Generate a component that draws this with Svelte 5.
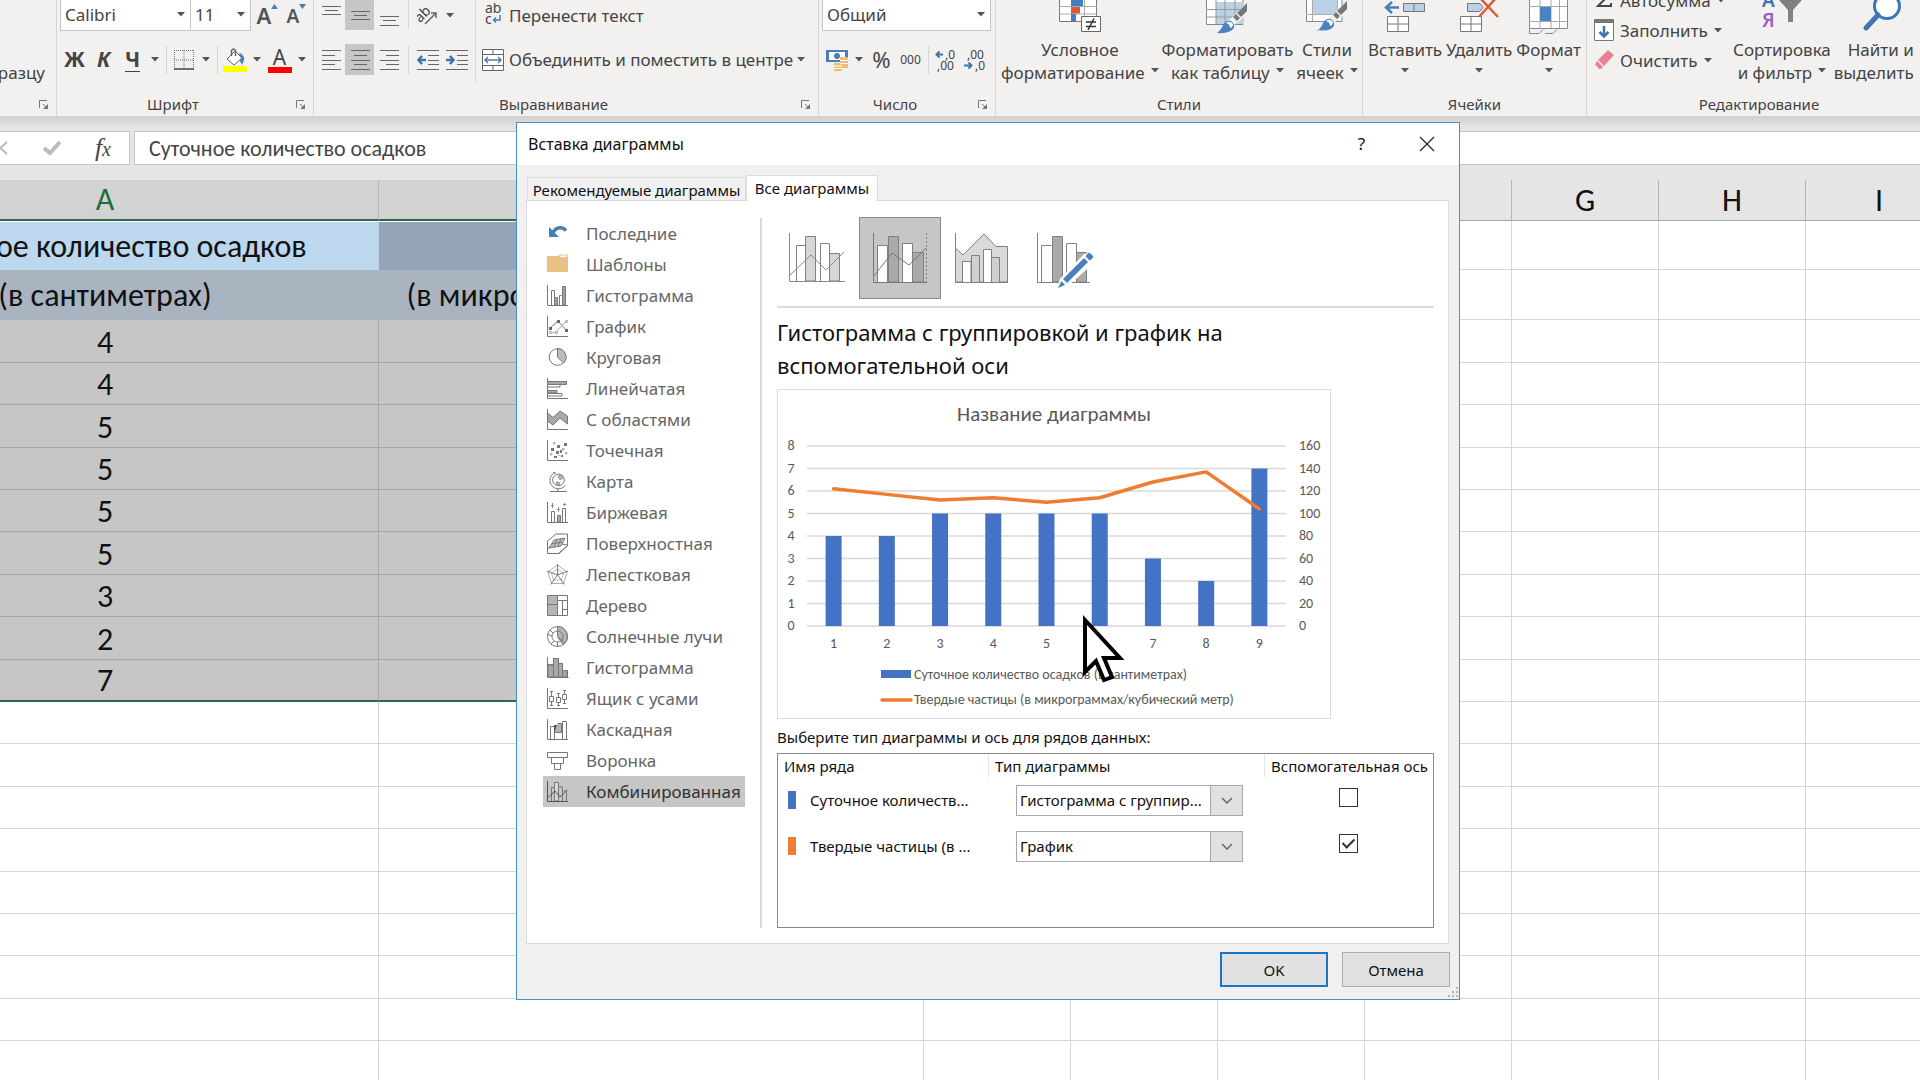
<script>
  const columns = ['A', 'B', 'C', 'D', 'E', 'F', 'G', 'H', 'I'];
  const rainfall = [4, 4, 5, 5, 5, 5, 3, 2, 7];
  const particles = [122, 117, 112, 114, 110, 114, 128, 137, 104];
  const rest = columns.slice(2);
  const blankRows = Array.from({ length: 9 }, (_, i) => i + rainfall.length);

  let formula = $state('Суточное количество осадков');
  let selectedType = $state(18);
  let selectedVariant = $state(1);
  let series = $state([
    { name: 'Суточное количеств...', color: 'blue', type: 'Гистограмма с группир...', secondary: false },
    { name: 'Твердые частицы (в ...', color: 'orange', type: 'График', secondary: true }
  ]);

  const isTall = (i) => i % 5 === 0 || i % 5 === 2;

  const axis = '<path d="M.5 0V20.5H21"/>';
  const types = [
    ['Последние', '<path d="M19 7.5C15 3 9 4 6 9.500" stroke="#4a7fb5" stroke-width="3.500"/><path d="M2 4V14H12Z" fill="#4a7fb5" stroke="none"/>'],
    ['Шаблоны', '<path d="M0 2H11L13 .5H21V18H0Z" fill="#e9c283" stroke="none"/><path d="M12 3L14 1.500H20V3Z" fill="#fff" stroke="none"/>'],
    ['Гистограмма', axis + '<path d="M4.500 20V5.500H7.500V20M12.500 20V10.500H14.500"/><path d="M7.500 20V12.500H10.500V20ZM15.500 20V1.500H18.500V20Z" fill="#a0a0a0"/>'],
    ['График', axis + '<path d="M3 12L11 5L20 15"/><path d="M3 17L9 16L19 5" stroke="#a5a5a5"/><path d="M2 11h3v3H2zM10 4h3v3h-3zM18 13h3v3h-3z" fill="#666" stroke="none"/><path d="M2.500 15.500h2v2h-2zM8.500 15.500h2v2h-2zM18.500 4.500h2v2h-2z" fill="#fff" stroke="#aaa"/>'],
    ['Круговая', '<circle cx="10.500" cy="10" r="8.300"/><path d="M10.500 10V1.700A8.300 8.300 0 0 1 16.500 16Z" fill="#bbb"/>'],
    ['Линейчатая', axis + '<path d="M.5 3.500H19.500V6.500H.5ZM.5 12.500H10V15H.5Z" fill="#a8a8a8"/><path d="M.5 6.500H13V9H.5M.5 15.500H15V18H.5"/>'],
    ['С областями', axis + '<path d="M.5 4L6 8.500L13 2L20.500 7V15L13 9L6 16L.5 12Z" fill="#a8a8a8"/>'],
    ['Точечная', axis + '<path d="M4 8h3v3H4zM10 5h3v3h-3zM17 3h3v3h-3zM9 11h3v3H9zM13 10h2v3h-2zM7 16h3v2H7zM14 15h2v2h-2z" fill="#777" stroke="none"/><path d="M6.500 2.500h1.500v1.500H6.500zM15.500 8.500h1.500v1.500h-1.500zM3.500 13.500H5V15H3.500zM18.500 12.500H20V14h-1.500zM11.500 15.500H13" stroke="#aaa"/>'],
    ['Карта', '<circle cx="11.500" cy="9" r="5.800"/><path d="M8 1.500A8.500 8.500 0 1 0 18.500 14M6 1L9 2.500M11 17.500V20M3 20.500H20"/><path d="M11 5L15 4L16 7L13 9ZM9 11L12 11L13 14L10 14Z" fill="#b5b5b5" stroke="#999"/>'],
    ['Биржевая', axis + '<path d="M4.500 20V9.500H7.500V20M15.500 20V6.500H18.500V20"/><path d="M10.500 20V13.500H13.500V20Z" fill="#a8a8a8"/><path d="M5.500 1V6M11.500 5V10M17.500 1V4M4 3.500H7M10 7.500H13M16 2.500H19" stroke="#888"/>'],
    ['Поверхностная', '<path d="M.5 8L9 1H20.500V13L12 20.500H.5ZM.5 16L9 10L20.500 12M12 20L20 13"/><path d="M2 15L7 7L18 5L14 13Z" fill="#c5c5c5"/><path d="M4.500 11L16 9M10 6.500L7 14M14 6L10.500 14"/>'],
    ['Лепестковая', '<path d="M10.500 1L20 8L16.500 19.500H4.500L1 8Z" stroke="#aaa"/><path d="M10.500 5L16.500 9L14.500 16H6.500L4.500 9Z" stroke="#bbb"/><path d="M10.500 0V11L0 7M10.500 11L21 7M10.500 11L3.500 20.500M10.500 11L17.500 20.500"/>'],
    ['Дерево', '<path d="M.5.5H10.500V20.500H.5Z" fill="#b5b5b5"/><path d="M.5 9.500H10.500M10.500.5H20.500V20.500H10.500M10.500 5.500H20.500M15.500 5.500V20.500M15.500 14.500H20.500"/>'],
    ['Солнечные лучи', '<circle cx="10.500" cy="10.500" r="10"/><path d="M10.500.5A10 10 0 0 1 16 18.700L10.500 10.500Z" fill="#b5b5b5"/><circle cx="10.500" cy="10.500" r="5.500"/><path d="M10.500 0V10.500L18 17M5 10.500L.5 8M7 15L4 18M10.500 16V21M6 7L3 4"/>'],
    ['Гистограмма', '<path d="M.5 0V20.500H21.500M.5 7.500H6.500V1.500H11.500V6.500H15.500V13.500H20.500V20.500"/><path d="M1 8H6.500V20H1ZM6.500 1.500H11.500V20H6.500ZM11.500 6.500H15.500V20H11.500ZM15.500 13.500H20V20H15.500Z" fill="#a8a8a8"/>'],
    ['Ящик с усами', axis + '<path d="M2.500 8.500H6.500V13.500H2.500ZM9.500 9.500H13.500V14.500H9.500ZM15.500 6.500H19.500V11.500H15.500ZM4.500 3V8M4.500 14V18M11.500 6V9M11.500 15V18M17.500 2V6M17.500 12V15M3 3.500H6M3 17.500H6M10 5.500H13M10 17.500H13M16 2.500H19M16 15.500H19"/>'],
    ['Каскадная', axis + '<path d="M3.500 20V7.500H7.500V20M15.500 20V2.500H19.500V20"/><path d="M7 6H10.500V13H7Z" fill="#555" stroke="none"/><path d="M10.500 4.500H14.500V13.500H7.500" fill="#b5b5b5"/>'],
    ['Воронка', '<path d="M.5 2.500H20.500V7.500H.5ZM4.500 7.500H16.500V13.500H4.500ZM7.500 13.500H13.500V19.500H7.500Z"/>'],
    ['Комбинированная', '<path d="M4.500 20V6.500H7.500M11.500 20V6H15.500V20M16.500 10H19.500V20"/><path d="M7.500 20V1.500H11.500V20Z" fill="#d8d8d8"/><path d="M.5 0V20.500H21M.5 17L8 10L13 16L20.500 9" stroke="#555"/>']
  ];

  const variants = [
    ['Гистограмма с группировкой и график', '<path d="M19.500 64V28.500H28.500M43.500 64V26.500H52.500V64" fill="#fff"/><path d="M28.500 64V19.500H38.500V64ZM52.500 64V36.500H62.500V64Z" fill="#d6d6d6"/><path d="M12.500 16V64.500H68M12 59L34 38L49 53L67 35" stroke="#8a8a8a"/>'],
    ['Гистограмма с группировкой и график на вспомогательной оси', '<path d="M18.500 65V28.500H28.500V65M43.500 65V26.500H53.500V65" fill="#fff"/><path d="M29.500 65V19.500H39.500V65ZM53.500 65V35.500H64.500V65Z" fill="#aaa"/><path d="M14.500 16V65.500H68M15 59L33 36L50 48L67 31" stroke="#777"/><path d="M67.500 16V65" stroke-dasharray="2 2"/>'],
    ['С областями и гистограмма', '<path d="M14.500 31L22 38L43 17L55 29.500H66.500V65H14.500Z" fill="#d9d9d9"/><path d="M21.500 65V44.500H30V65M42.500 65V32.500H50.500V65" fill="#fff"/><path d="M30.500 65V38.500H38.500V65M50.500 65V40.500H58.500V65" fill="#d0d0d0"/><path d="M14.500 16V65.500H67"/>'],
    ['Пользовательская комбинация', '<path d="M18.500 65V28.500H28.500M43.500 65V26.500H53.500V65" fill="#fff"/><path d="M29.500 65V19.500H39.500V65ZM53.500 65V35.500H63.500V65Z" fill="#aaa"/><path d="M14.500 16V65.500H67"/><g stroke="none"><path d="M34 72L37 62L61 37L69 35L73 40L71 46L45 69Z" fill="#fff"/><path d="M35 71L38.500 64L42 68ZM40 62L61 41L65 45L44 66ZM62.500 39.500L65 36H67L70 39V41L66.500 43.500Z" fill="#4a7fc0"/></g>']
  ];

  const plot = { left: 30, right: 509, top: 57, bottom: 237 };
  const slot = (plot.right - plot.left) / rainfall.length;
  const centre = (i) => plot.left + slot * (i + 0.5);
  const rise = (share) => plot.bottom - (plot.bottom - plot.top) * share;
  const linePoints = particles.map((v, i) => `${centre(i)},${rise(v / 160)}`).join(' ');
</script>

{#snippet arrow()}
  <svg class="arrow" width="8" height="5" viewBox="0 0 8 5" aria-hidden="true"><path d="M0 0H8L4 4.500Z" fill="#555" /></svg>
{/snippet}

{#snippet drop(name)}
  <button class="drop" aria-label={name}>{@render arrow()}</button>
{/snippet}

{#snippet caption(text, launcher)}
  <div class="caption" class:launchable={launcher}>
    <span>{text}</span>
    {#if launcher}
      <button class="launcher" aria-label={`Параметры: ${text}`}>
        <svg width="10" height="10" viewBox="0 0 10 10" fill="none" stroke="#777"><path d="M.5 8V.5H8" /><path d="M4 4L8 8" /><path d="M9 4V9H4Z" fill="#777" stroke="none" /></svg>
      </button>
    {/if}
  </div>
{/snippet}

{#snippet lines(d)}
  <svg width="20" height="22" viewBox="0 0 20 22" stroke="#666" fill="none" aria-hidden="true"><path {d} /></svg>
{/snippet}

<main class="app">
  <header class="ribbon">
    <section class="group clipboard">
      <div class="body"><button class="painter">по образцу</button></div>
      {@render caption('', true)}
    </section>

    <section class="group font">
      <div class="body rows">
        <div class="row top">
          <label class="combo family"><select aria-label="Шрифт"><option>Calibri</option></select>{@render arrow()}</label>
          <label class="combo size"><select aria-label="Размер шрифта"><option>11</option></select>{@render arrow()}</label>
          <button class="tool grow" aria-label="Увеличить размер шрифта"><b>A</b><svg width="7" height="5" viewBox="0 0 7 5"><path d="M0 5L3.500 0L7 5Z" fill="#4a7fb5" /></svg></button>
          <button class="tool shrink" aria-label="Уменьшить размер шрифта"><b>A</b><svg width="7" height="5" viewBox="0 0 7 5"><path d="M0 0L3.500 5L7 0Z" fill="#4a7fb5" /></svg></button>
        </div>
        <div class="row">
          <button class="tool letter">Ж</button>
          <button class="tool letter italic">К</button>
          <button class="tool letter under">Ч</button>
          {@render drop('Подчеркивание')}
          <i class="vsep"></i>
          <button class="tool" aria-label="Границы">
            <svg width="20" height="20" viewBox="0 0 20 20" fill="none" stroke="#777"><path d="M0 .5H20M.5 0V19M19.500 0V19M10 0V19M0 10H20" stroke-dasharray="1 1" /><path d="M0 19H20" stroke="#444" stroke-width="1.500" /></svg>
          </button>
          {@render drop('Границы')}
          <i class="vsep"></i>
          <button class="tool" aria-label="Цвет заливки">
            <svg width="24" height="24" viewBox="0 0 24 24" fill="none"><rect y="18" width="24" height="6" fill="#ff0" /><path d="M4 11L12 3L19 10L11 17Z" fill="#fff" stroke="#666" /><path d="M8.500 8V2.500Q10.500-.5 12.500 2.500V8" stroke="#666" stroke-width="1.500" /><path d="M17 5Q22 8 21 12L19 17L17 13Q19 9 16 6Z" fill="#4a7fb5" /></svg>
          </button>
          {@render drop('Цвет заливки')}
          <button class="tool color" aria-label="Цвет текста"><span>A</span><i></i></button>
          {@render drop('Цвет текста')}
        </div>
      </div>
      {@render caption('Шрифт', true)}
    </section>

    <section class="group align">
      <div class="body split">
        <div class="rows">
          <div class="row top">
            <button class="tool" aria-label="По верхнему краю">{@render lines('M1 2.500H20M4 6.500H17M1 10.500H20')}</button>
            <button class="tool on" aria-label="По середине">{@render lines('M1 7.500H20M4 11.500H17M1 15.500H20')}</button>
            <button class="tool" aria-label="По нижнему краю">{@render lines('M1 12.500H20M4 16.500H17M1 21.500H20')}</button>
            <i class="vsep wide"></i>
            <button class="tool" aria-label="Ориентация">
              <svg width="22" height="22" viewBox="0 0 22 22" fill="none" stroke="#666"><text x="-2" y="13" transform="rotate(-45 8 10)" font-family="Noto Sans, sans-serif" font-size="14" fill="#444" stroke="none">ab</text><path d="M8 20L19 9M14 9H19V14" stroke-width="1.500" /></svg>
            </button>
            {@render drop('Ориентация')}
          </div>
          <div class="row">
            <button class="tool" aria-label="По левому краю">{@render lines('M1 1.500H20M1 6.500H14M1 11.500H20M1 15.500H14M1 20.500H20')}</button>
            <button class="tool on" aria-label="По центру">{@render lines('M1 1.500H20M4 6.500H17M1 11.500H20M4 15.500H17M1 20.500H20')}</button>
            <button class="tool" aria-label="По правому краю">{@render lines('M1 1.500H20M7 6.500H20M1 11.500H20M7 15.500H20M1 20.500H20')}</button>
            <i class="vsep wide"></i>
            <button class="tool" aria-label="Уменьшить отступ">
              <svg width="22" height="22" viewBox="0 0 22 22" fill="none" stroke="#666"><path d="M0 1.500H22M11 6.500H22M11 11.500H22M11 15.500H22M0 20.500H22" /><path d="M9 11H2M5 7L1.500 11L5 15" stroke="#3f74ad" stroke-width="2.500" /></svg>
            </button>
            <button class="tool" aria-label="Увеличить отступ">
              <svg width="22" height="22" viewBox="0 0 22 22" fill="none" stroke="#666"><path d="M0 1.500H22M11 6.500H22M11 11.500H22M11 15.500H22M0 20.500H22" /><path d="M0 11H7M4 7L7.500 11L4 15" stroke="#3f74ad" stroke-width="2.500" /></svg>
            </button>
          </div>
        </div>
        <i class="tallsep"></i>
        <div class="rows">
          <div class="row top">
            <button class="wide-tool">
              <svg width="22" height="24" viewBox="0 0 22 24" fill="none"><g font-family="Noto Sans, sans-serif" font-size="14" fill="#444"><text x="3" y="10">ab</text><text x="3" y="21">c</text></g><path d="M18 12V17H12M14 14.500L11.500 17L14 19.500" stroke="#4a7fb5" stroke-width="1.500" /></svg>
              Перенести текст
            </button>
          </div>
          <div class="row">
            <button class="wide-tool">
              <svg width="22" height="22" viewBox="0 0 22 22" fill="#fff" stroke="#666"><path d="M.5.5H21.500V21.500H.5ZM.5 5.500H21.500M.5 16.500H21.500M11 .5V5.500M11 16.500V21.500" /><path d="M3 11H19M6 8L3 11L6 14M16 8L19 11L16 14" fill="none" stroke="#4a7fb5" stroke-width="1.500" /></svg>
              Объединить и поместить в центре
            </button>
            {@render drop('Объединить')}
          </div>
        </div>
      </div>
      {@render caption('Выравнивание', true)}
    </section>

    <section class="group number">
      <div class="body rows">
        <div class="row top">
          <label class="combo format"><select aria-label="Числовой формат"><option>Общий</option></select>{@render arrow()}</label>
        </div>
        <div class="row">
          <button class="tool" aria-label="Денежный формат">
            <svg width="22" height="22" viewBox="0 0 22 22"><path d="M0 1H22V13H0Z" fill="#4a7fb5" /><path d="M3 3H19V11H3Z" fill="#fff" /><circle cx="11" cy="7" r="3" fill="#4a7fb5" /><path d="M14 8H22V19H14ZM8 14H16V22H8Z" fill="#edbd77" /><path d="M14 11.500H22M14 14.500H22M8 17H16M8 19.500H16" stroke="#fff" /></svg>
          </button>
          {@render drop('Денежный формат')}
          <button class="tool percent">%</button>
          <button class="tool zeros">000</button>
          <i class="vsep"></i>
          <button class="tool" aria-label="Увеличить разрядность">
            <svg width="22" height="24" viewBox="0 0 22 24"><g font-family="Noto Sans, sans-serif" font-size="12" fill="#444"><text x="10" y="11">,0</text><text x="2" y="22">,00</text></g><path d="M8 6.500H2M4.500 3.500L1.500 6.500L4.500 9.500" fill="none" stroke="#3f74ad" stroke-width="2" /></svg>
          </button>
          <button class="tool" aria-label="Уменьшить разрядность">
            <svg width="22" height="24" viewBox="0 0 22 24"><g font-family="Noto Sans, sans-serif" font-size="12" fill="#444"><text x="3" y="11">,00</text><text x="11" y="22">,0</text></g><path d="M0 17.500H7M4.500 14.500L7.500 17.500L4.500 20.500" fill="none" stroke="#3f74ad" stroke-width="2" /></svg>
          </button>
        </div>
      </div>
      {@render caption('Число', true)}
    </section>

    <section class="group styles">
      <div class="body bigs">
        <button class="big">
          <svg width="42" height="34" viewBox="0 0 42 34"><path d="M.5 0V21.500H37.500V0" fill="#fff" stroke="#777" /><path d="M0 6.500H38M0 14H38M12.500 0V21M25.500 0V21" stroke="#aaa" fill="none" /><path d="M12 0H24V6H12ZM12 14H17V21H12Z" fill="#3f7fc0" /><path d="M12 7H21V13.500H12Z" fill="#dd5a30" /><path d="M22.500 16.500H41.500V31.500H22.500Z" fill="#fff" stroke="#666" /><path d="M27 22H37M27 26.500H37M35 18.500L29 30" stroke="#333" fill="none" stroke-width="1.500" /></svg>
          <span>Условное</span><span>форматирование {@render arrow()}</span>
        </button>
        <button class="big">
          <svg width="42" height="34" viewBox="0 0 42 34"><path d="M.5 0V24.500H37V0" fill="#fff" stroke="#888" /><path d="M10 2H38V24H10Z" fill="#bcd0e6" /><path d="M0 9.500H38M0 17H38M10 0V24M19 0V24M29 0V24" stroke="#999" fill="none" /><path d="M42 3V14L28 25L23 20L36 8Z" fill="#f2f1f0" /><path d="M41 3V11L35 17L31 13ZM30 14L34 18L31 21L27 17Z" fill="#777" /><path d="M11 33Q16 29 17 25Q20 20 25 21Q29 24 28 28Q24 34 11 33Z" fill="#4a84c0" /><path d="M20 23Q24 20 27 24Q27 27 24 28Q24 24 20 23Z" fill="#fff" /></svg>
          <span>Форматировать</span><span>как таблицу {@render arrow()}</span>
        </button>
        <button class="big">
          <svg width="42" height="34" viewBox="0 0 42 34"><path d="M.5 0V21.500H36V0" fill="#fff" stroke="#888" /><path d="M7 0H31V14H7Z" fill="#bcd0e6" /><path d="M0 14.500H37M6.500 0V21M31.500 0V21" stroke="#aaa" fill="none" /><path d="M42 1V12L28 23L23 18L36 6Z" fill="#f2f1f0" /><path d="M41 1V9L35 15L31 11ZM30 12L34 16L31 19L27 15Z" fill="#777" /><path d="M11 31Q16 27 17 23Q20 18 25 19Q29 22 28 26Q24 32 11 30Z" fill="#4a84c0" /><path d="M20 21Q24 18 27 22Q27 25 24 26Q24 22 20 21Z" fill="#fff" /></svg>
          <span>Стили</span><span>ячеек {@render arrow()}</span>
        </button>
      </div>
      {@render caption('Стили', false)}
    </section>

    <section class="group cells">
      <div class="body bigs">
        <button class="big">
          <svg width="42" height="34" viewBox="0 0 42 34" fill="none"><path d="M15 7.500H2M8 2L2 7.500L8 13" stroke="#4a7fb5" stroke-width="2.500" /><path d="M19.500 3.500H40.500V11.500H19.500ZM30 3.500V11.500" fill="#bcd0e6" stroke="#777" /><path d="M3.500 16.500H24.500V31.500H3.500ZM14 16.500V31.500M3.500 24H24.500" fill="#fff" stroke="#777" /></svg>
          <span>Вставить</span><span>{@render arrow()}</span>
        </button>
        <button class="big">
          <svg width="42" height="34" viewBox="0 0 42 34" fill="none"><path d="M9.500 3.500H22L25 7.500L22 11.500H9.500Z" fill="#bcd0e6" stroke="#777" /><path d="M2.500 16.500H23.500V31.500H2.500ZM13 16.500V31.500M2.500 24H23.500" fill="#fff" stroke="#777" /><path d="M22 -2L40 17M38 -2L21 17" stroke="#dd5a3a" stroke-width="2.500" /></svg>
          <span>Удалить</span><span>{@render arrow()}</span>
        </button>
        <button class="big">
          <svg width="42" height="34" viewBox="0 0 42 34" fill="none"><path d="M1.500 0V28.500H39.500V0" fill="#fff" stroke="#888" /><path d="M1 6.500H39M1 21.500H39M12 0V28M23 0V28M31.500 0V28" stroke="#aaa" /><path d="M12 7H23V21H12Z" fill="#4a84c0" /><path d="M1.500 29V33.500H11L15 29.500M17 33.500H25L29 29.500" stroke="#888" /></svg>
          <span>Формат</span><span>{@render arrow()}</span>
        </button>
      </div>
      {@render caption('Ячейки', false)}
    </section>

    <section class="group editing">
      <div class="body split">
        <div class="stack">
          <button class="line"><svg width="20" height="22" viewBox="0 0 20 22" fill="none" stroke="#444" stroke-width="2"><path d="M16 6V3H4L11 10L4 17H17V14" /></svg>Автосумма {@render arrow()}</button>
          <button class="line"><svg width="20" height="22" viewBox="0 0 20 22" fill="none"><path d="M.5.5H19.500V21.500H.5Z" fill="#fff" stroke="#777" /><path d="M0 0H20V4H0Z" fill="#777" /><path d="M10 7V17M5.500 13L10 17.500L14.500 13" stroke="#3f74ad" stroke-width="2.500" /></svg>Заполнить {@render arrow()}</button>
          <button class="line"><svg width="20" height="22" viewBox="0 0 20 22"><path d="M14 1L20 6L10 17L4 11Z" fill="#ea8295" /><path d="M3 12L9 18L7 20H5L1 15.500Z" fill="#ea8295" /></svg>Очистить {@render arrow()}</button>
        </div>
        <button class="big sort">
          <svg width="42" height="34" viewBox="0 0 42 34"><g font-family="Noto Sans, sans-serif" font-size="19" font-weight="600"><text x="1" y="7" fill="#3f74ad">А</text><text x="1" y="27" fill="#9a5fc0">Я</text></g><path d="M18 0H41L32 10V22H27V10Z" fill="#808080" /></svg>
          <span>Сортировка</span><span>и фильтр {@render arrow()}</span>
        </button>
        <button class="big">
          <svg width="42" height="34" viewBox="0 0 42 34" fill="none"><circle cx="27" cy="6" r="12.500" fill="#fff" stroke="#3f74b5" stroke-width="3" /><path d="M18 15L6 28" stroke="#3f74b5" stroke-width="5" stroke-linecap="round" /></svg>
          <span>Найти и</span><span>выделить {@render arrow()}</span>
        </button>
      </div>
      {@render caption('Редактирование', false)}
    </section>
  </header>

  <div class="formula">
    <div class="fx">
      <button aria-label="Отмена ввода"><svg width="18" height="18" viewBox="0 0 18 18" fill="none" stroke="#bbb" stroke-width="2"><path d="M2 3L15 15M15 3L2 15" /></svg></button>
      <button aria-label="Ввод"><svg width="20" height="18" viewBox="0 0 20 18" fill="none" stroke="#bbb" stroke-width="4"><path d="M2 9L8 14L18 3" /></svg></button>
      <button class="fn" aria-label="Вставить функцию">f<small>x</small></button>
    </div>
    <input aria-label="Строка формул" bind:value={formula} />
  </div>

  <div class="sheet">
    <table class="grid">
      <colgroup><col class="first" /><col class="second" />{#each rest as c (c)}<col class="other" />{/each}</colgroup>
      <thead>
        <tr>{#each columns as c, i (c)}<th scope="col" class:picked={i < 2}>{c}</th>{/each}</tr>
      </thead>
      <tbody>
        <tr class="title"><td class="active">Суточное количество осадков</td><td class="shade"></td>{#each rest as c (c)}<td></td>{/each}</tr>
        <tr class="unit"><td>(в сантиметрах)</td><td>(в микрограммах/кубический метр)</td>{#each rest as c (c)}<td></td>{/each}</tr>
        {#each rainfall as v, i (i)}
          <tr class="data" class:tall={isTall(i)} class:last={i === rainfall.length - 1}><td>{v}</td><td></td>{#each rest as c (c)}<td></td>{/each}</tr>
        {/each}
        {#each blankRows as i (i)}
          <tr class="blank" class:tall={isTall(i)}>{#each columns as c (c)}<td></td>{/each}</tr>
        {/each}
      </tbody>
    </table>
  </div>

  <div class="dialog" role="dialog" aria-labelledby="dialog-title">
    <div class="titlebar">
      <h1 id="dialog-title">Вставка диаграммы</h1>
      <button aria-label="Справка">?</button>
      <button aria-label="Закрыть"><svg width="16" height="16" viewBox="0 0 16 16" stroke="#222" fill="none" stroke-width="1.200"><path d="M1 1L15 15M15 1L1 15" /></svg></button>
    </div>

    <div class="tabs" role="tablist">
      <button role="tab" aria-selected="false">Рекомендуемые диаграммы</button>
      <button role="tab" aria-selected="true" class="current">Все диаграммы</button>
    </div>

    <div class="panel">
      <nav class="types" aria-label="Типы диаграмм">
        {#each types as [name, icon], i (i)}
          <button class:chosen={selectedType === i} onclick={() => (selectedType = i)}>
            <svg width="22" height="21" viewBox="0 0 22 21" fill="none" stroke="#777" aria-hidden="true">{@html icon}</svg>
            {name}
          </button>
        {/each}
      </nav>

      <div class="detail">
        <div class="variants">
          {#each variants as [name, icon], i (i)}
            <button aria-label={name} class:chosen={selectedVariant === i} onclick={() => (selectedVariant = i)}>
              <svg width="82" height="82" viewBox="0 0 82 82" fill="none" stroke="#808080">{@html icon}</svg>
            </button>
          {/each}
        </div>
        <h2>Гистограмма с группировкой и график на вспомогательной оси</h2>

        <div class="chart">
          <svg width="552" height="328" viewBox="1 1 552 328" role="img" aria-label="Название диаграммы">
            <text class="chart-title" x="277" y="32" text-anchor="middle">Название диаграммы</text>
            {#each Array(9) as _, i (i)}
              <line x1={plot.left} x2={plot.right} y1={rise(i / 8)} y2={rise(i / 8)} stroke="#d9d9d9" stroke-width="1.500" />
              <text x="14" y={rise(i / 8) + 4} text-anchor="middle">{i}</text>
              <text x="522" y={rise(i / 8) + 4}>{i * 20}</text>
            {/each}
            {#each rainfall as v, i (i)}
              <rect x={centre(i) - 8} y={rise(v / 8)} width="16" height={plot.bottom - rise(v / 8)} fill="#4472c4" />
              {#if i !== 5}<text x={centre(i)} y="259" text-anchor="middle">{i + 1}</text>{/if}
            {/each}
            <polyline points={linePoints} fill="none" stroke="#ed7d31" stroke-width="3.500" stroke-linejoin="round" stroke-linecap="round" />
            <rect x="104" y="281" width="30" height="8" fill="#4472c4" />
            <text x="137" y="290">Суточное количество осадков (в сантиметрах)</text>
            <path d="M105 311H134" stroke="#ed7d31" stroke-width="3.500" stroke-linecap="round" />
            <text x="137" y="315">Твердые частицы (в микрограммах/кубический метр)</text>
          </svg>
        </div>

        <p class="hint" id="series-hint">Выберите тип диаграммы и ось для рядов данных:</p>
        <div class="series">
          <table aria-labelledby="series-hint">
            <thead><tr><th scope="col" class="c1">Имя ряда</th><th scope="col" class="c2">Тип диаграммы</th><th scope="col" class="c3">Вспомогательная ось</th></tr></thead>
            <tbody>
              {#each series as s (s.color)}
                <tr>
                  <td class="c1"><span class="name"><i class={s.color}></i>{s.name}</span></td>
                  <td class="c2">
                    <label class="pick">
                      <select aria-label={`Тип диаграммы: ${s.name}`} bind:value={s.type}><option>Гистограмма с группир...</option><option>График</option></select>
                      <span><svg width="12" height="7" viewBox="0 0 12 7" fill="none" stroke="#666" stroke-width="1.500"><path d="M1 1L6 6L11 1" /></svg></span>
                    </label>
                  </td>
                  <td class="c3"><input type="checkbox" aria-label={`Вспомогательная ось: ${s.name}`} bind:checked={s.secondary} /></td>
                </tr>
              {/each}
            </tbody>
          </table>
        </div>
      </div>
    </div>

    <div class="actions">
      <button class="primary">OK</button>
      <button>Отмена</button>
    </div>
    <svg class="grip" width="12" height="12" viewBox="0 0 12 12" fill="#b5b5b5" aria-hidden="true"><path d="M9 0h2v2H9zM9 4h2v2H9zM9 8h2v2H9zM5 4h2v2H5zM5 8h2v2H5zM1 8h2v2H1z" /></svg>
    <svg class="pointer" width="50" height="76" viewBox="0 0 50 76" aria-hidden="true"><path d="M6 9V61L17 50L25 69L33 66L25 47H41Z" fill="#fff" stroke="#000" stroke-width="4" /></svg>
  </div>
</main>

<style>
  :global(body) { margin: 0; overflow: hidden; }
  .app { position: relative; height: 100vh; overflow: hidden; display: flex; flex-direction: column; background: #fff; color: #444; font-family: "Noto Sans", "Open Sans", sans-serif; font-size: 17px; line-height: 23px; }
  button, select, input { font: inherit; color: inherit; }
  button { padding: 0; border: 0; background: none; white-space: nowrap; }
  svg { display: block; flex: none; }
  i { font-style: normal; }

  .ribbon { flex: none; display: flex; height: 116px; background: #f2f1f0; overflow: hidden; }
  .group { flex: none; box-sizing: border-box; display: flex; flex-direction: column; padding: 0 3px; border-right: 1px solid #d5d5d5; }
  .clipboard { width: 57px; }
  .font { width: 257px; }
  .align { width: 505px; padding-left: 2px; }
  .number { width: 177px; }
  .styles { width: 367px; }
  .cells { width: 224px; }
  .editing { width: 345px; }
  .body { height: 94px; }
  .rows { display: flex; flex-direction: column; gap: 14px; }
  .row { display: flex; align-items: center; height: 31px; }
  .row.top { height: 30px; }
  .split { display: flex; }
  .clipboard .body { display: flex; justify-content: flex-end; align-items: flex-end; }
  .painter { padding: 0 8px 10px 0; }
  .caption { display: flex; align-items: center; height: 21px; font-size: 15px; }
  .caption span { flex: 1; text-align: center; }
  .launchable span { padding-right: 6px; }
  .launcher { width: 18px; display: grid; place-items: center; }
  .tool { width: 29px; height: 31px; display: grid; place-items: center; flex: none; }
  .row.top .tool { height: 30px; }
  .on { background: #c6c6c6; }
  .drop { width: 16px; height: 31px; display: grid; place-items: center; flex: none; }
  .vsep { flex: none; width: 6px; height: 28px; background: linear-gradient(#d5d5d5, #d5d5d5) center / 1px 100% no-repeat; }
  .vsep.wide { width: 10px; }
  .tallsep { width: 1px; height: 82px; margin: 0 6px 0 4px; background: #d5d5d5; }
  .combo { display: flex; align-items: center; box-sizing: border-box; height: 31px; background: #fff; border: 1px solid #c6c6c6; border-top: 0; padding-right: 5px; }
  .combo select { appearance: none; flex: 1; width: 0; min-width: 0; margin: 0; border: 0; padding: 0 0 0 4px; background: none; text-align: left; text-align-last: left; }
  .combo.family { width: 131px; }
  .combo.size { width: 60px; border-left: 0; }
  .combo.format { width: 169px; }
  .grow, .shrink { display: flex; justify-content: center; align-items: flex-start; padding-left: 4px; }
  .grow b { font-size: 22px; line-height: 30px; font-weight: 600; color: #555; }
  .shrink b { font-size: 19px; line-height: 32px; font-weight: 600; color: #555; }
  .grow svg, .shrink svg { margin-top: 4px; }
  .letter { font-size: 21px; font-weight: 700; }
  .italic { font-style: italic; }
  .under { text-decoration: underline; text-decoration-thickness: 1px; text-underline-offset: 4px; }
  .color { font-size: 21px; line-height: 20px; align-content: center; }
  .color i { width: 24px; height: 6px; background: #f00; }
  .percent { font-size: 22px; }
  .zeros { font-size: 12px; }
  .wide-tool { display: flex; align-items: center; gap: 5px; }
  .bigs { display: flex; gap: 4px; padding-left: 2px; }
  .styles .bigs { gap: 3px; }
  .big { display: flex; flex-direction: column; align-items: center; }
  .big svg:first-child { margin-bottom: 4px; }
  .big span { display: flex; align-items: center; justify-content: center; gap: 6px; height: 23px; }
  .stack { display: flex; flex-direction: column; margin: -15px 12px 0 4px; width: 127px; }
  .line { display: flex; align-items: center; gap: 6px; height: 30px; }
  .sort { margin-right: 3px; }

  .formula { flex: none; display: flex; gap: 4px; height: 34px; padding: 15px 0; background: linear-gradient(#cfcfcf, #d6d6d6 4px, #e5e5e5 12px); }
  .fx { box-sizing: border-box; width: 130px; display: flex; justify-content: space-between; align-items: center; background: #fff; border: 1px solid #c6c6c6; border-left: 0; padding: 0 18px 0 0; }
  .fx button:first-child { margin-left: -8px; }
  .fn { font: italic 26px "Liberation Serif", serif; color: #444; }
  .fn small { font-size: 20px; }
  .formula input { flex: 1; min-width: 0; border: 1px solid #c6c6c6; border-right: 0; padding: 0 14px; background: #fff; font-family: Calibri, Carlito, Lato, sans-serif; font-size: 22px; }

  .sheet { flex: 1; min-height: 0; overflow: hidden; background: #fff; }
  .grid { table-layout: fixed; width: 2121px; margin-left: -168px; border-spacing: 0; font-family: Calibri, Carlito, Lato, sans-serif; font-size: 32px; line-height: 38px; color: #111; text-align: center; }
  .first { width: 547px; }
  .second { width: 545px; }
  .other { width: 147px; }
  .grid th, .grid td { box-sizing: border-box; height: 42px; padding: 3px 0 0; border: 0 solid #d6d6d6; border-width: 0 1px 1px 0; white-space: nowrap; overflow: hidden; }
  .grid .tall td { height: 43px; }
  .grid th { height: 41px; padding-top: 2px; font-weight: 400; background: #e5e5e5; border-color: #a5a5a5; border-right-color: #b5b5b5; }
  .grid th.picked { background: #d2d2d2; color: #1e6b3f; padding-top: 1px; border-bottom: 2px solid #2a6a48; }
  .grid .title td { height: 49px; }
  .grid .unit td { height: 50px; }
  .grid .title .active { background: #bcd7ee; border-color: #bcd7ee; border-top: 1px solid #fff; }
  .grid .title .shade { background: #94a5b8; border-color: #94a5b8; border-top: 1px solid #fff; }
  .grid .unit td:nth-child(-n + 2) { background: #a9b4c0; border-color: #a9b4c0; }
  .grid .data td:nth-child(-n + 2) { background: #c6c6c6; border-color: #a6a6a6; }
  .grid .last td:nth-child(-n + 2) { border-bottom: 2px solid #2a6a48; padding-top: 2px; }

  .dialog { position: absolute; left: 516px; top: 122px; width: 942px; height: 876px; display: flex; flex-direction: column; background: #f0f0f0; border: 1px solid #4a8ec4; color: #111; font-size: 15px; line-height: 20px; }
  .titlebar { display: flex; align-items: center; height: 42px; background: #fff; padding-left: 11px; }
  .titlebar h1 { flex: 1; margin: 0; font-size: 16px; font-weight: 400; }
  .titlebar button { width: 65px; height: 42px; display: grid; place-items: center; font-size: 17px; }
  .tabs { display: flex; align-items: flex-end; height: 35px; margin-left: 10px; }
  .tabs button { box-sizing: border-box; height: 23px; width: 219px; border: 1px solid #dcdcdc; border-bottom: 0; padding-top: 1px; }
  .tabs .current { width: 132px; height: 26px; margin-bottom: -1px; background: #fff; position: relative; padding-bottom: 3px; }
  .panel { flex: 1; min-height: 0; display: flex; margin: 0 10px 0 9px; padding: 17px 14px 15px 16px; background: #fff; border: 1px solid #dcdcdc; }
  .types { width: 202px; padding-right: 15px; border-right: 2px solid #d9d9d9; display: flex; flex-direction: column; }
  .types button { display: flex; align-items: center; gap: 17px; height: 31px; padding-left: 4px; font-size: 17px; color: #666; }
  .types .chosen { background: #c6c6c6; color: #333; }
  .detail { flex: 1; min-width: 0; margin-left: 15px; display: flex; flex-direction: column; }
  .variants { display: flex; margin-top: -1px; padding-bottom: 7px; border-bottom: 2px solid #dcdcdc; }
  .variants .chosen { background: #c6c6c6; outline: 1px solid #8a8a8a; outline-offset: -1px; }
  h2 { margin: 8px 0 7px; font-size: 22px; line-height: 33px; font-weight: 400; max-width: 500px; }
  .chart { align-self: flex-start; border: 1px solid #dcdcdc; }
  .chart text { font-family: Calibri, Carlito, Lato, sans-serif; font-size: 14px; fill: #595959; }
  .chart .chart-title { font-size: 21px; }
  .hint { margin: 8px 0 6px; }
  .series { flex: 1; box-sizing: border-box; border: 1px solid #888; }
  .series table { width: 100%; table-layout: fixed; border-spacing: 0; }
  .series th { height: 23px; padding: 0 0 0 6px; text-align: left; font-weight: 400; white-space: nowrap; }
  .series th + th { border-left: 1px solid #dfe6ea; }
  .series td { height: 46px; padding: 0; }
  .series .c1 { width: 204px; }
  .series .c2 { width: 269px; }
  .series td.c1 { width: auto; }
  .name { display: flex; align-items: center; gap: 14px; padding-left: 10px; white-space: nowrap; }
  .name i { width: 8px; height: 18px; }
  .blue { background: #4472c4; }
  .orange { background: #ed7d31; }
  .pick { display: flex; box-sizing: border-box; width: 227px; height: 31px; margin-left: 28px; background: #fff; border: 1px solid #a8a8a8; }
  .pick select { appearance: none; flex: 1; min-width: 0; border: 0; padding: 0 0 0 3px; background: none; color: #111; }
  .pick span { width: 31px; display: grid; place-items: center; background: #e1e1e1; border-left: 1px solid #a8a8a8; }
  .series td.c3 { text-align: center; vertical-align: top; }
  .series input { appearance: none; box-sizing: border-box; width: 19px; height: 19px; margin: 11px 0 0; border: 1px solid #333; background: #fff; display: inline-grid; place-items: center; }
  .series input:checked::before { content: ""; width: 5px; height: 10px; border: solid #333; border-width: 0 2px 2px 0; transform: rotate(45deg); margin-bottom: 3px; }
  .actions { display: flex; justify-content: flex-end; gap: 14px; padding: 8px 9px 12px; }
  .actions button { box-sizing: border-box; width: 108px; height: 35px; background: #e1e1e1; border: 1px solid #adadad; }
  .actions .primary { border: 2px solid #1a76c4; }
  .grip { position: absolute; right: 0; bottom: 0; }
  .pointer { position: absolute; left: 562px; top: 488px; }
</style>
